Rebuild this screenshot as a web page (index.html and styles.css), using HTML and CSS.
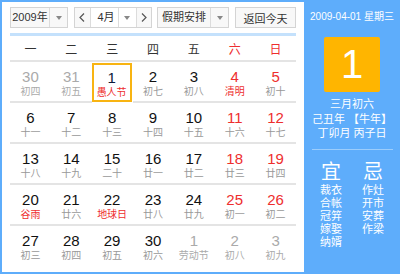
FILE: index.html
```html
<!DOCTYPE html>
<html lang="zh-CN">
<head>
<meta charset="utf-8">
<link rel="stylesheet" href="styles.css">
</head>
<body>
<div class="cal">
  <div class="main">
    <div class="toolbar">
      <div class="sel year"><span class="val">2009年</span><span class="arr"><i></i></span></div>
      <div class="month">
        <span class="nav"><svg width="6" height="9" viewBox="0 0 6 9"><path d="M5 0.5 L1 4.5 L5 8.5" fill="none" stroke="#555" stroke-width="1.2"/></svg></span>
        <div class="sel mon"><span class="val">4月</span><span class="arr"><i></i></span></div>
        <span class="nav"><svg width="6" height="9" viewBox="0 0 6 9"><path d="M1 0.5 L5 4.5 L1 8.5" fill="none" stroke="#555" stroke-width="1.2"/></svg></span>
      </div>
      <div class="sel hol"><span class="val">假期安排</span><span class="arr"><i></i></span></div>
      <div class="btn">返回今天</div>
    </div>
    <div class="rule"></div>
    <div class="week">
      <span>一</span><span>二</span><span>三</span><span>四</span><span>五</span><span class="red">六</span><span class="red">日</span>
    </div>
    <div class="grid">
      <div class="cell other"><b>30</b><em>初四</em></div>
      <div class="cell other"><b>31</b><em>初五</em></div>
      <div class="cell today"><b>1</b><em class="fest">愚人节</em></div>
      <div class="cell"><b>2</b><em>初七</em></div>
      <div class="cell"><b>3</b><em>初八</em></div>
      <div class="cell wkend"><b>4</b><em class="fest">清明</em></div>
      <div class="cell wkend"><b>5</b><em>初十</em></div>

      <div class="cell"><b>6</b><em>十一</em></div>
      <div class="cell"><b>7</b><em>十二</em></div>
      <div class="cell"><b>8</b><em>十三</em></div>
      <div class="cell"><b>9</b><em>十四</em></div>
      <div class="cell"><b>10</b><em>十五</em></div>
      <div class="cell wkend"><b>11</b><em>十六</em></div>
      <div class="cell wkend"><b>12</b><em>十七</em></div>

      <div class="cell"><b>13</b><em>十八</em></div>
      <div class="cell"><b>14</b><em>十九</em></div>
      <div class="cell"><b>15</b><em>二十</em></div>
      <div class="cell"><b>16</b><em>廿一</em></div>
      <div class="cell"><b>17</b><em>廿二</em></div>
      <div class="cell wkend"><b>18</b><em>廿三</em></div>
      <div class="cell wkend"><b>19</b><em>廿四</em></div>

      <div class="cell"><b>20</b><em class="fest">谷雨</em></div>
      <div class="cell"><b>21</b><em>廿六</em></div>
      <div class="cell"><b>22</b><em class="fest">地球日</em></div>
      <div class="cell"><b>23</b><em>廿八</em></div>
      <div class="cell"><b>24</b><em>廿九</em></div>
      <div class="cell wkend"><b>25</b><em>初一</em></div>
      <div class="cell wkend"><b>26</b><em>初二</em></div>

      <div class="cell last"><b>27</b><em>初三</em></div>
      <div class="cell last"><b>28</b><em>初四</em></div>
      <div class="cell last"><b>29</b><em>初五</em></div>
      <div class="cell last"><b>30</b><em>初六</em></div>
      <div class="cell last other"><b>1</b><em>劳动节</em></div>
      <div class="cell last other"><b>2</b><em>初八</em></div>
      <div class="cell last other"><b>3</b><em>初九</em></div>
    </div>
  </div>
  <div class="side">
    <div class="date">2009-04-01 星期三</div>
    <div class="big">1</div>
    <div class="lunar">
      <div>三月初六</div>
      <div>己丑年 【牛年】</div>
      <div>丁卯月 丙子日</div>
    </div>
    <div class="sep"></div>
    <div class="yj">
      <div class="col">
        <div class="h">宜</div>
        <div>裁衣</div><div>合帐</div><div>冠笄</div><div>嫁娶</div><div>纳婿</div>
      </div>
      <div class="col">
        <div class="h">忌</div>
        <div>作灶</div><div>开市</div><div>安葬</div><div>作梁</div>
      </div>
    </div>
  </div>
</div>
</body>
</html>
```

FILE: styles.css
```css
* { box-sizing: border-box; }
html, body { margin: 0; padding: 0; background: #fff; }
body {
  font-family: "Liberation Sans", "Noto Sans CJK SC", sans-serif;
  font-size: 11px;
  color: #333;
}
.cal {
  display: flex;
  width: 400px;
  height: 274px;
}
.main {
  width: 304px;
  height: 274px;
  border: 2px solid #5eadfb;
  border-right: 0;
  padding: 5px 8px 0 8px;
}
.toolbar {
  display: flex;
  height: 21px;
}
.sel, .month, .btn {
  height: 21px;
  border: 1px solid #d4d4d4;
  background: #f8f8f8;
  display: flex;
  align-items: center;
}
.year { width: 58px; }
.month { width: 78px; margin-left: 6px; }
.hol { width: 72px; margin-left: 5px; }
.btn {
  width: 61px;
  margin-left: 6px;
  justify-content: center;
  color: #333;
}
.val {
  flex: 1;
  text-align: center;
  line-height: 19px;
  color: #333;
}
.arr {
  width: 18px;
  height: 19px;
  border-left: 1px solid #dcdcdc;
  display: flex;
  align-items: center;
  justify-content: center;
}
.arr i {
  display: block;
  width: 0;
  height: 0;
  border-left: 3.5px solid transparent;
  border-right: 3.5px solid transparent;
  border-top: 4px solid #888;
}
.month .mon {
  border: 0;
  border-left: 1px solid #dcdcdc;
  border-right: 1px solid #dcdcdc;
  width: 47px;
  height: 19px;
  background: #fff;
}
.month .mon .val { padding-left: 4px; }
.nav {
  flex: 1;
  display: flex;
  align-items: center;
  justify-content: center;
  height: 19px;
}
.nav svg { display: block; }
.rule {
  margin-top: 5px;
  height: 3px;
  background: #c4e1fc;
}
.week {
  display: grid;
  grid-template-columns: repeat(7, 1fr);
  height: 26px;
  border-bottom: 2px solid #e4e4e4;
  align-items: center;
  text-align: center;
  font-size: 12px;
  color: #333;
}
.week .red { color: #ee2e2e; }
.grid {
  display: grid;
  grid-template-columns: repeat(7, 1fr);
}
.cell {
  height: 41px;
  border-bottom: 2px solid #e4e4e4;
  text-align: center;
  padding-top: 6px;
}
.cell.last { border-bottom: 0; }
.cell b {
  display: block;
  font-weight: normal;
  font-size: 15px;
  line-height: 17px;
  color: #111;
}
.cell em {
  display: block;
  font-style: normal;
  font-size: 10px;
  line-height: 13px;
  color: #999;
}
.cell.wkend b { color: #ee2e2e; }
.cell em.fest { color: #ee2e2e; }
.cell.other b { color: #aaa; }
.cell.other em { color: #aaa; }
.cell.today {
  border: 2px solid #f8b412;
  margin: 1px 1px 1px 0;
  height: 39px;
  padding-top: 4px;
}
.cell.today b { color: #0c1a3a; }
.side {
  width: 96px;
  height: 274px;
  background: #5eadfb;
  color: #fff;
  display: flex;
  flex-direction: column;
  align-items: center;
}
.date {
  margin-top: 10px;
  font-size: 10px;
  line-height: 14px;
  white-space: nowrap;
}
.big {
  margin-top: 13px;
  width: 56px;
  height: 55px;
  background: #ffb500;
  border-radius: 2px;
  font-size: 40px;
  line-height: 55px;
  text-align: center;
  color: #fff;
}
.lunar {
  margin-top: 5px;
  font-size: 11px;
  line-height: 14.5px;
  text-align: center;
  white-space: nowrap;
}
.sep {
  margin-top: 8px;
  width: 81px;
  height: 1px;
  background: #9ccdfc;
}
.yj {
  display: flex;
  gap: 2px;
  margin-top: 10px;
}
.yj .col {
  width: 40px;
  text-align: center;
  font-size: 11px;
  line-height: 13px;
}
.yj .h {
  font-size: 20px;
  line-height: 24px;
}
```
